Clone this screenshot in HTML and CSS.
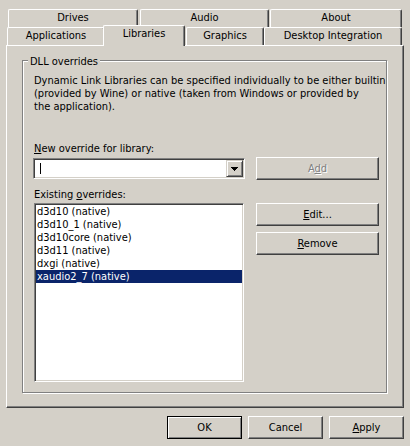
FILE: index.html
```html
<!DOCTYPE html>
<html>
<head>
<meta charset="utf-8">
<link rel="stylesheet" href="styles.css">
</head>
<body>
<div class="dialog">
  <div class="tabstrip">
    <div class="tabrow back">
      <div class="tab t-drives">Drives</div>
      <div class="tab t-audio">Audio</div>
      <div class="tab t-about">About</div>
    </div>
    <div class="tabrow front">
      <div class="tab t-apps">Applications</div>
      <div class="tab t-libs selected">Libraries</div>
      <div class="tab t-graphics">Graphics</div>
      <div class="tab t-desktop">Desktop Integration</div>
    </div>
  </div>
  <div class="panel">
    <div class="group">
      <span class="group-title">DLL overrides</span>
      <p class="desc">Dynamic Link Libraries can be specified individually to be either builtin<br>(provided by Wine) or native (taken from Windows or provided by<br>the application).</p>
      <div class="label label-new"><u>N</u>ew override for library:</div>
      <div class="field-row">
        <div class="combo">
          <span class="caret"></span>
          <span class="drop"><svg width="7" height="4" viewBox="0 0 7 4" shape-rendering="crispEdges"><path d="M0 0h7v1h-1v1h-1v1h-1v1h-1v-1h-1v-1h-1v-1h-1z" fill="#000"/></svg></span>
        </div>
        <div class="btn wide disabled">A<u>d</u>d</div>
      </div>
      <div class="label label-existing">Existing <u>o</u>verrides:</div>
      <div class="list-row">
        <div class="listbox">
          <div class="item">d3d10 (native)</div>
          <div class="item">d3d10_1 (native)</div>
          <div class="item">d3d10core (native)</div>
          <div class="item">d3d11 (native)</div>
          <div class="item">dxgi (native)</div>
          <div class="item selected">xaudio2_7 (native)</div>
        </div>
        <div class="side">
          <div class="btn wide"><u>E</u>dit...</div>
          <div class="btn wide"><u>R</u>emove</div>
        </div>
      </div>
    </div>
  </div>
  <div class="actions">
    <div class="btn default">OK</div>
    <div class="btn">Cancel</div>
    <div class="btn"><u>A</u>pply</div>
  </div>
</div>
</body>
</html>
```
FILE: styles.css
```css
html, body {
  margin: 0;
  background: #d4d0c8;
}
body {
  width: 410px;
  height: 446px;
  overflow: hidden;
  font-family: "DejaVu Sans Condensed", "DejaVu Sans", sans-serif;
  font-size: 11px;
  line-height: 13px;
  color: #000;
}
.dialog {
  padding-top: 9px;
}

/* tabs */
.tabrow {
  display: flex;
  height: 18px;
}
.tabrow.back { margin-left: 8px; }
.tabrow.front { margin-left: 7px; }
.tab {
  box-sizing: border-box;
  height: 18px;
  border-top: 1px solid #fff;
  border-left: 1px solid #fff;
  border-right: 1px solid #404040;
  box-shadow: inset -1px 0 #808080;
  border-radius: 2px 2px 0 0;
  background: #d4d0c8;
  text-align: center;
  line-height: 16px;
  white-space: nowrap;
}
.t-drives { width: 130px; }
.t-audio { width: 129px; margin-left: 2px; }
.t-about { width: 132px; margin-left: 1px; }
.t-apps { width: 98px; }
.t-libs { width: 82px; margin-left: -2px; }
.t-graphics { width: 78px; margin-left: 1px; }
.t-desktop { width: 138px; }
.tab.selected {
  position: relative;
  z-index: 2;
  height: 21px;
  margin-top: -2px;
}

/* panel */
.panel {
  box-sizing: border-box;
  margin-left: 6px;
  width: 398px;
  height: 363px;
  border: 1px solid;
  border-color: #fff #404040 #404040 #fff;
  box-shadow: inset -1px -1px #808080;
  padding: 14px 0 0 15px;
}
.group {
  position: relative;
  box-sizing: border-box;
  width: 365px;
  height: 333px;
  border: 1px solid #808080;
  box-shadow: inset 1px 1px #fff, 1px 1px #fff;
  padding: 13px 0 0 10px;
}
.group-title {
  position: absolute;
  top: -6px;
  left: 5px;
  padding: 0 2px;
  background: #d4d0c8;
  line-height: 13px;
}
.desc {
  margin: 0 0 0 1px;
  white-space: nowrap;
}
.label {
  margin-left: 1px;
  line-height: 13px;
}
.label-new { margin-top: 29px; }
.label-existing { margin-top: 8px; }

.field-row {
  display: flex;
  align-items: flex-start;
  gap: 11px;
  height: 25px;
}
.combo {
  box-sizing: border-box;
  display: flex;
  align-items: flex-start;
  justify-content: space-between;
  width: 212px;
  height: 21px;
  margin-top: 3px;
  background: #fff;
  border: 1px solid;
  border-color: #808080 #fff #fff #808080;
  box-shadow: inset 1px 1px #404040, inset -1px -1px #d4d0c8;
  padding: 1px;
}
.caret {
  width: 1px;
  height: 11px;
  margin: 3px 0 0 5px;
  background: #000;
}
.drop {
  box-sizing: border-box;
  display: flex;
  align-items: center;
  justify-content: center;
  width: 17px;
  height: 17px;
  background: #d4d0c8;
  border: 1px solid;
  border-color: #d4d0c8 #404040 #404040 #d4d0c8;
  box-shadow: inset 1px 1px #fff, inset -1px -1px #808080;
}
.drop svg { display: block; margin-top: 1px; }

.list-row {
  display: flex;
  align-items: flex-start;
  gap: 12px;
  margin-top: 2px;
}
.listbox {
  box-sizing: border-box;
  width: 210px;
  height: 179px;
  margin-left: 1px;
  background: #fff;
  border: 1px solid;
  border-color: #808080 #fff #fff #808080;
  box-shadow: inset 1px 1px #404040, inset -1px -1px #d4d0c8;
  padding: 1px;
}
.item {
  height: 13px;
  line-height: 13px;
  padding-left: 1px;
  white-space: nowrap;
}
.item.selected {
  background: #0a246a;
  color: #fff;
}
.side {
  display: flex;
  flex-direction: column;
  gap: 6px;
}

/* buttons */
.btn {
  box-sizing: border-box;
  width: 75px;
  height: 23px;
  border: 1px solid;
  border-color: #fff #404040 #404040 #fff;
  box-shadow: inset -1px -1px #808080;
  background: #d4d0c8;
  text-align: center;
  line-height: 21px;
  white-space: nowrap;
}
.btn.wide { width: 123px; }
.field-row .btn { margin-top: 2px; }
.btn.disabled {
  color: #808080;
  text-shadow: 1px 1px #fff;
}
.btn.default {
  border-color: #000;
  box-shadow: inset 1px 1px #fff, inset -1px -1px #808080;
}
.actions {
  display: flex;
  justify-content: flex-end;
  gap: 6px;
  margin-top: 8px;
  padding-right: 6px;
}
u { text-decoration: underline; text-underline-offset: 1px; }
```
